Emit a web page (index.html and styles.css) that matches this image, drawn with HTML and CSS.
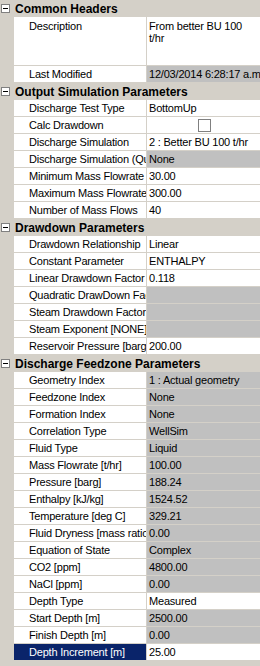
FILE: index.html
```html
<!DOCTYPE html>
<html>
<head>
  <meta charset="UTF-8" />
  <title>Discharge Properties</title>
  <link rel="stylesheet" href="styles.css">
</head>
<body>
  <div class="prop-grid">

    <div class="category">
      <span class="toggle"><svg width="9" height="9" viewBox="0 0 9 9"><rect x="0.5" y="0.5" width="8" height="8" fill="#fff" stroke="#808080"/><line x1="2" y1="4.5" x2="7" y2="4.5" stroke="#000"/></svg></span>
      <span class="cat-title">Common Headers</span>
    </div>
    <div class="row tall">
      <div class="gutter"></div>
      <div class="name">Description</div>
      <div class="value multi">From better BU 100<br>t/hr</div>
    </div>
    <div class="row">
      <div class="gutter"></div>
      <div class="name">Last Modified</div>
      <div class="value ro">12/03/2014 6:28:17 a.m.</div>
    </div>

    <div class="category">
      <span class="toggle"><svg width="9" height="9" viewBox="0 0 9 9"><rect x="0.5" y="0.5" width="8" height="8" fill="#fff" stroke="#808080"/><line x1="2" y1="4.5" x2="7" y2="4.5" stroke="#000"/></svg></span>
      <span class="cat-title">Output Simulation Parameters</span>
    </div>
    <div class="row"><div class="gutter"></div><div class="name">Discharge Test Type</div><div class="value">BottomUp</div></div>
    <div class="row"><div class="gutter"></div><div class="name">Calc Drawdown</div><div class="value check"><span class="checkbox"></span></div></div>
    <div class="row"><div class="gutter"></div><div class="name">Discharge Simulation</div><div class="value">2 : Better BU 100 t/hr</div></div>
    <div class="row"><div class="gutter"></div><div class="name">Discharge Simulation (Quality)</div><div class="value ro">None</div></div>
    <div class="row"><div class="gutter"></div><div class="name">Minimum Mass Flowrate [t/hr]</div><div class="value">30.00</div></div>
    <div class="row"><div class="gutter"></div><div class="name">Maximum Mass Flowrate [t/hr]</div><div class="value">300.00</div></div>
    <div class="row"><div class="gutter"></div><div class="name">Number of Mass Flows</div><div class="value">40</div></div>

    <div class="category">
      <span class="toggle"><svg width="9" height="9" viewBox="0 0 9 9"><rect x="0.5" y="0.5" width="8" height="8" fill="#fff" stroke="#808080"/><line x1="2" y1="4.5" x2="7" y2="4.5" stroke="#000"/></svg></span>
      <span class="cat-title">Drawdown Parameters</span>
    </div>
    <div class="row"><div class="gutter"></div><div class="name">Drawdown Relationship</div><div class="value">Linear</div></div>
    <div class="row"><div class="gutter"></div><div class="name">Constant Parameter</div><div class="value">ENTHALPY</div></div>
    <div class="row"><div class="gutter"></div><div class="name">Linear Drawdown Factor</div><div class="value">0.118</div></div>
    <div class="row"><div class="gutter"></div><div class="name">Quadratic DrawDown Factor</div><div class="value ro"></div></div>
    <div class="row"><div class="gutter"></div><div class="name">Steam Drawdown Factor</div><div class="value ro"></div></div>
    <div class="row"><div class="gutter"></div><div class="name">Steam Exponent [NONE]</div><div class="value ro"></div></div>
    <div class="row"><div class="gutter"></div><div class="name">Reservoir Pressure [barg]</div><div class="value">200.00</div></div>

    <div class="category">
      <span class="toggle"><svg width="9" height="9" viewBox="0 0 9 9"><rect x="0.5" y="0.5" width="8" height="8" fill="#fff" stroke="#808080"/><line x1="2" y1="4.5" x2="7" y2="4.5" stroke="#000"/></svg></span>
      <span class="cat-title">Discharge Feedzone Parameters</span>
    </div>
    <div class="row"><div class="gutter"></div><div class="name">Geometry Index</div><div class="value ro">1 : Actual geometry</div></div>
    <div class="row"><div class="gutter"></div><div class="name">Feedzone Index</div><div class="value ro">None</div></div>
    <div class="row"><div class="gutter"></div><div class="name">Formation Index</div><div class="value ro">None</div></div>
    <div class="row"><div class="gutter"></div><div class="name">Correlation Type</div><div class="value ro">WellSim</div></div>
    <div class="row"><div class="gutter"></div><div class="name">Fluid Type</div><div class="value ro">Liquid</div></div>
    <div class="row"><div class="gutter"></div><div class="name">Mass Flowrate [t/hr]</div><div class="value ro">100.00</div></div>
    <div class="row"><div class="gutter"></div><div class="name">Pressure [barg]</div><div class="value ro">188.24</div></div>
    <div class="row"><div class="gutter"></div><div class="name">Enthalpy [kJ/kg]</div><div class="value ro">1524.52</div></div>
    <div class="row"><div class="gutter"></div><div class="name">Temperature [deg C]</div><div class="value ro">329.21</div></div>
    <div class="row"><div class="gutter"></div><div class="name">Fluid Dryness [mass ratio]</div><div class="value ro">0.00</div></div>
    <div class="row"><div class="gutter"></div><div class="name">Equation of State</div><div class="value ro">Complex</div></div>
    <div class="row"><div class="gutter"></div><div class="name">CO2 [ppm]</div><div class="value ro">4800.00</div></div>
    <div class="row"><div class="gutter"></div><div class="name">NaCl [ppm]</div><div class="value ro">0.00</div></div>
    <div class="row"><div class="gutter"></div><div class="name">Depth Type</div><div class="value">Measured</div></div>
    <div class="row"><div class="gutter"></div><div class="name">Start Depth [m]</div><div class="value ro">2500.00</div></div>
    <div class="row"><div class="gutter"></div><div class="name">Finish Depth [m]</div><div class="value ro">0.00</div></div>
    <div class="row selected"><div class="gutter"></div><div class="name">Depth Increment [m]</div><div class="value">25.00</div></div>

  </div>
</body>
</html>
```

FILE: styles.css
```css
body {
  margin: 0;
  background-color: #d4d0c8;
  font-family: "Liberation Sans", Arial, sans-serif;
  font-size: 11px;
  letter-spacing: -0.2px;
  color: #000;
}

.prop-grid {
  width: 260px;
  background-color: #d4d0c8;
}

/* category header */
.category {
  display: flex;
  align-items: center;
  height: 17px;
  background-color: #d4d0c8;
}
.toggle {
  display: flex;
  width: 9px;
  height: 9px;
  margin-left: 1px;
  margin-right: 5px;
}
.cat-title {
  font-weight: bold;
  font-size: 12px;
  letter-spacing: 0;
  white-space: nowrap;
}

/* property rows */
.row {
  display: grid;
  grid-template-columns: 14px 133px 1fr;
  height: 17px;
}
.row.tall {
  height: 49px;
}
.gutter {
  background-color: #d4d0c8;
}
.name,
.value {
  background-color: #fff;
  border-bottom: 1px solid #d4d0c8;
  white-space: nowrap;
  overflow: hidden;
  line-height: 16px;
}
.name {
  padding-left: 15px;
  border-right: 1px solid #d4d0c8;
}
.value {
  padding-left: 2px;
}
.value.ro {
  background-color: #c0c0c0;
}
.value.multi {
  line-height: 12px;
  padding-top: 3px;
}
.tall .name {
  line-height: 13px;
  padding-top: 3px;
}
.value.check {
  display: flex;
  align-items: center;
  justify-content: center;
}
.checkbox {
  width: 11px;
  height: 11px;
  border: 1px solid #808080;
  background-color: #fff;
}

.row.selected .name {
  background-color: #0a246a;
  color: #fff;
}
```
